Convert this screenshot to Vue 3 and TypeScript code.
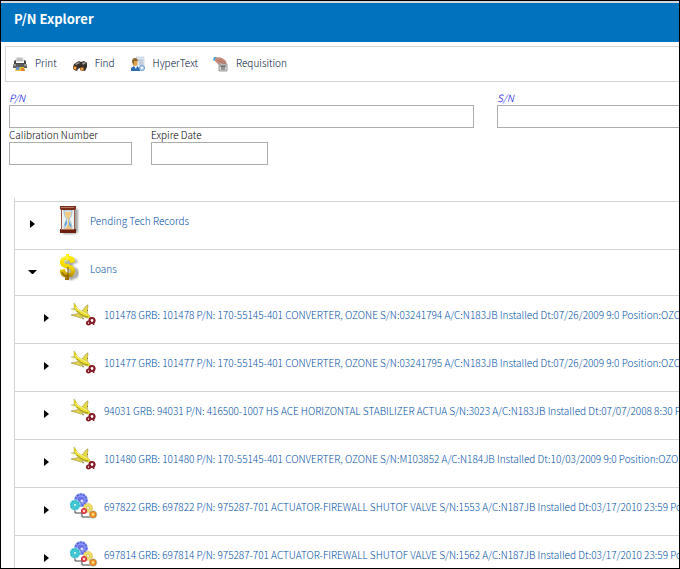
<script setup lang="ts">
import { ref } from 'vue'

type IconName = 'hourglass' | 'dollar' | 'plane' | 'gears'

interface TreeRow {
  id: string
  icon: IconName
  label: string
  level: number
  open: boolean
}

const rows = ref<TreeRow[]>([
  { id: 'pending', icon: 'hourglass', label: 'Pending Tech Records', level: 1, open: false },
  { id: 'loans', icon: 'dollar', label: 'Loans', level: 1, open: true },
  { id: '101478', icon: 'plane', label: '101478 GRB: 101478 P/N: 170-55145-401 CONVERTER, OZONE S/N:03241794 A/C:N183JB Installed Dt:07/26/2009 9:0 Position:OZO', level: 2, open: false },
  { id: '101477', icon: 'plane', label: '101477 GRB: 101477 P/N: 170-55145-401 CONVERTER, OZONE S/N:03241795 A/C:N183JB Installed Dt:07/26/2009 9:0 Position:OZO', level: 2, open: false },
  { id: '94031', icon: 'plane', label: '94031 GRB: 94031 P/N: 416500-1007 HS ACE HORIZONTAL STABILIZER ACTUA S/N:3023 A/C:N183JB Installed Dt:07/07/2008 8:30 P', level: 2, open: false },
  { id: '101480', icon: 'plane', label: '101480 GRB: 101480 P/N: 170-55145-401 CONVERTER, OZONE S/N:M103852 A/C:N184JB Installed Dt:10/03/2009 9:0 Position:OZO', level: 2, open: false },
  { id: '697822', icon: 'gears', label: '697822 GRB: 697822 P/N: 975287-701 ACTUATOR-FIREWALL SHUTOF VALVE S/N:1553 A/C:N187JB Installed Dt:03/17/2010 23:59 Po', level: 2, open: false },
  { id: '697814', icon: 'gears', label: '697814 GRB: 697814 P/N: 975287-701 ACTUATOR-FIREWALL SHUTOF VALVE S/N:1562 A/C:N187JB Installed Dt:03/17/2010 23:59 Po', level: 2, open: false },
])

const partNumber = ref('')
const serialNumber = ref('')
const calibration = ref('')
const expireDate = ref('')
</script>

<template>
  <div class="window">
    <header class="titlebar">
      <h1>P/N Explorer</h1>
    </header>

    <nav class="toolbar" aria-label="Actions">
      <button type="button" class="tool">
        <svg viewBox="0 0 16 16" aria-hidden="true">
          <path d="M4 1h7l2 5H3z" fill="#e4e4e4" />
          <path d="M5 2h5l1 3H4z" fill="#bcbcbc" />
          <path d="M2 5l2-1v3h8V4l2 1v7H2z" fill="#484848" />
          <path d="M1 8h14v4H1z" fill="#5c5c5c" />
          <path d="M1 8h3v2H1zM12 8h3v2h-3z" fill="#999" />
          <path d="M4 11h8l1 4H3z" fill="#e8c832" />
          <path d="M4 11h4l-1 3H4z" fill="#6c90d0" />
          <path d="M9 12h3l1 3H9z" fill="#e0802c" />
        </svg>
        <span>Print</span>
      </button>
      <button type="button" class="tool">
        <svg viewBox="0 0 16 16" aria-hidden="true">
          <path d="M2 8l5-3 2 1 3-1 3 2v4l-2 4-4-1-1-2-2 1-1 2-3-1-1-3z" fill="#38302c" />
          <path d="M3 8l4-2 1 1-4 2zM10 7l2-1 2 1-3 2z" fill="#a09a96" />
          <circle cx="3" cy="12" r="2" fill="#b4641c" />
          <circle cx="3" cy="12" r="1" fill="#f4b868" />
          <circle cx="10" cy="13" r="2" fill="#b4641c" />
          <circle cx="10" cy="13" r="1" fill="#f4b868" />
        </svg>
        <span>Find</span>
      </button>
      <button type="button" class="tool">
        <svg viewBox="0 0 16 16" aria-hidden="true">
          <path d="M6 1h8v12H6z" fill="#dfe8f2" stroke="#b4c2d2" stroke-width=".6" />
          <path d="M8 4h5M9 6h4M9 8h4" stroke="#8fa6c0" stroke-width=".8" />
          <path d="M1 15v-3l3-2h3l3 3v2z" fill="#2c6cb0" />
          <path d="M4 10l2 3 1-3z" fill="#fff" />
          <ellipse cx="5" cy="6.500" rx="2.500" ry="3.500" fill="#e0a050" />
          <path d="M2 6c0-3 1-4 3-4s3 2 3 3L4 5v4z" fill="#8c6830" />
          <circle cx="12" cy="12" r="2.600" fill="#b4d0ee" stroke="#7ca4d4" />
          <circle cx="12" cy="12" r="1" fill="#fff" />
        </svg>
        <span>HyperText</span>
      </button>
      <button type="button" class="tool">
        <svg viewBox="0 0 16 16" aria-hidden="true">
          <path d="M1 1l3 0-2 4-2-1z" fill="#38a8e0" />
          <path d="M2 2c4-2 8 0 11 3l1 4-3 1-3-3-2 2-4-4z" fill="#c98d7c" />
          <path d="M4 4l4 2 3 3M7 3l5 4" stroke="#a4695d" stroke-width=".8" fill="none" />
          <path d="M6 8h8v7H6z" fill="#d4d4d0" stroke="#888" stroke-width=".8" />
          <path d="M7 10h6M9 10v4M11 10v4" stroke="#555" fill="none" />
        </svg>
        <span>Requisition</span>
      </button>
    </nav>

    <form class="filters" @submit.prevent>
      <div class="fields wide">
        <div class="field">
          <label for="pn" class="key">P/N</label>
          <input id="pn" v-model="partNumber" type="text" />
        </div>
        <div class="field">
          <label for="sn" class="key">S/N</label>
          <input id="sn" v-model="serialNumber" type="text" />
        </div>
      </div>
      <div class="fields narrow">
        <div class="field">
          <label for="cal">Calibration Number</label>
          <input id="cal" v-model="calibration" type="text" />
        </div>
        <div class="field">
          <label for="exp">Expire Date</label>
          <input id="exp" v-model="expireDate" type="text" />
        </div>
      </div>
    </form>

    <ul class="tree">
      <li
        v-for="row in rows"
        :key="row.id"
        class="row"
        :class="{ child: row.level === 2, open: row.open }"
      >
        <button
          type="button"
          class="toggle"
          :aria-expanded="row.open"
          :aria-label="row.label"
          @click="row.open = !row.open"
        >
          <svg viewBox="0 0 10 10" aria-hidden="true">
            <path v-if="row.open" d="M0 3h9L5 7H4z" />
            <path v-else d="M2 1l5 4-5 4z" />
          </svg>
        </button>

        <svg v-if="row.icon === 'hourglass'" class="icon" viewBox="0 0 32 32" aria-hidden="true">
          <defs>
            <filter id="glass-shadow"><feGaussianBlur stdDeviation="1" /></filter>
          </defs>
          <path d="M7 3h15v23l-3 2H7z" fill="#666" opacity=".6" filter="url(#glass-shadow)" />
          <path d="M5 3h14v21H5z" fill="#eef3f6" />
          <path d="M5 3h1v21H5zM18 3h1v21h-1z" fill="#9a5a44" />
          <path d="M8 4h8c0 5-1 7-3 9 2 3 3 6 3 11H8c0-5 1-8 3-11-2-2-3-4-3-9z" fill="#d5e6f1" stroke="#85a5ba" stroke-width=".7" />
          <path d="M9 6h6c0 3-1 5-3 7-2-2-3-4-3-7z" fill="#f2ca7c" />
          <path d="M12 12h1v7l3 4H9l3-4z" fill="#e8c47c" />
          <path d="M9 17l2-3v4l-2 3zM13 15l2 4v3l-2-3z" fill="#68a5d0" />
          <path d="M4 0h16v3l-1 1H5L4 3z" fill="#7d2e1b" />
          <path d="M5 1h13v1H5z" fill="#b47860" />
          <path d="M4 23h16v4H4z" fill="#69200f" />
          <path d="M5 23h13v1H5z" fill="#ae6c50" />
        </svg>

        <svg v-else-if="row.icon === 'dollar'" class="icon" viewBox="0 0 32 32" aria-hidden="true">
          <defs>
            <linearGradient id="gold" x1="0" y1="0" x2="0" y2="1">
              <stop offset="0" stop-color="#fff200" />
              <stop offset=".55" stop-color="#f1d400" />
              <stop offset="1" stop-color="#9b6b00" />
            </linearGradient>
            <filter id="soft"><feGaussianBlur stdDeviation="1" /></filter>
          </defs>
          <path d="M20 9c-2-4-10-4-10 1 0 6 11 3 11 9 0 5-9 6-12 1M15 5v21" fill="none" stroke="#666" stroke-width="4" opacity=".6" filter="url(#soft)" />
          <path d="M10 0h3v2c4 0 6 2 6 6l-5 1c0-4-6-4-6-1 0 3 11 1 11 9 0 4-3 6-6 6v3h-4v-3c-3 0-5-2-5-7l5-1c0 5 6 5 6 2 0-4-11-1-11-9 0-3 2-5 6-6z" fill="url(#gold)" />
          <path d="M11 1v7M6 6c1-2 4-3 7-2" fill="none" stroke="#fff75e" stroke-width="1" />
          <path d="M12 13v12M6 18c1 3 3 4 6 4" fill="none" stroke="#805500" stroke-width="1" />
        </svg>

        <svg v-else-if="row.icon === 'plane'" class="icon" viewBox="0 0 32 32" aria-hidden="true">
          <path d="M12 11l5-6h1l-1 9z" fill="#e6da3c" stroke="#aaa052" stroke-width=".7" />
          <path d="M11 13l4 3-4 2-10-3z" fill="#ded24a" stroke="#aaa052" stroke-width=".7" />
          <path d="M1 9l4-1 2 1-2 1z" fill="#d5ca55" stroke="#bdb470" stroke-width=".5" />
          <path d="M4 3l1 1 3 5 4 2 6 3 2 2v2h-3c-4-1-8-4-11-7L4 7z" fill="#eadf32" stroke="#aaa03c" stroke-width=".5" stroke-linejoin="round" />
          <path d="M6 7l3 3 8 4" stroke="#fff998" stroke-width="1" fill="none" />
          <path d="M7 11c4 4 6 5 11 6" stroke="#968a24" stroke-width="1" fill="none" />
          <path d="M12 18l2 1M17 10l1 1" stroke="#77713a" />
          <circle cx="22" cy="20.500" r="2.500" fill="#fff" stroke="#851923" stroke-width="2.200" />
          <circle cx="18.500" cy="23" r="1.600" fill="#fff" stroke="#851923" stroke-width="1.800" />
          <path d="M23 23l1 2" stroke="#851923" stroke-width="1.500" />
        </svg>

        <svg v-else class="icon" viewBox="0 0 32 32" aria-hidden="true">
          <path d="M5 16v5h7M12 20v5h8" fill="none" stroke="#444" stroke-width="1" />
          <circle cx="11" cy="8" r="7" fill="#a9b8f0" />
          <circle cx="11" cy="8" r="5.500" fill="#6a73ea" stroke="#5862e0" stroke-width="2" stroke-dasharray="2 1" />
          <circle cx="11" cy="8" r="4" fill="none" stroke="#8c98f4" stroke-width="1.500" />
          <circle cx="12" cy="9" r="2" fill="#d4dcff" stroke="#4850d4" stroke-width=".6" />
          <circle cx="5" cy="13" r="5.500" fill="#8adce4" />
          <circle cx="5" cy="13" r="4" fill="#40d0d8" stroke="#2fb4c4" stroke-width="1.500" stroke-dasharray="2 1" />
          <circle cx="5" cy="13" r="1.500" fill="#e8ffff" stroke="#2497a8" stroke-width=".6" />
          <circle cx="18" cy="16" r="5" fill="#efe2a0" />
          <circle cx="18" cy="16" r="4" fill="#f7e66a" stroke="#d8c450" stroke-width="1.200" stroke-dasharray="2 1" />
          <circle cx="18" cy="16" r="1.500" fill="#fff" stroke="#b89c30" stroke-width=".6" />
          <circle cx="14" cy="19" r="2.600" fill="#f05050" stroke="#d23040" stroke-width="1" />
          <circle cx="14" cy="19" r="1" fill="#fff" />
          <circle cx="23" cy="22.500" r="4.200" fill="#b8d4d8" />
          <circle cx="23" cy="22.500" r="3" fill="#f7a138" stroke="#d88020" stroke-width="1.200" />
          <circle cx="23" cy="22.500" r="1" fill="#fff0ac" />
        </svg>

        <a href="#" class="label" @click.prevent>{{ row.label }}</a>
      </li>
    </ul>
  </div>
</template>

<style>
body {
  margin: 0;
  background: #fff;
}
</style>

<style scoped>
.window {
  box-sizing: border-box;
  height: 100vh;
  overflow: hidden;
  border: 1px solid #000;
  background: #fff;
  color: #000;
  font-family: "Noto Sans CJK SC", "Noto Sans", sans-serif;
  font-size: 10px;
  font-weight: 300;
  line-height: 14px;
}

.titlebar {
  border-top: 2px solid #d9d6da;
  background: #0072be;
  padding: 7px 13px 14px;
}

.titlebar h1 {
  margin: 0;
  color: #fff;
  font-size: 13px;
  line-height: 18px;
  font-weight: 700;
}

.toolbar {
  display: flex;
  align-items: center;
  gap: 15px;
  margin: 4px 0 0 4px;
  padding: 7px 6px 9px;
  border: 1px solid #d3d3d3;
  border-right: 0;
}

.tool {
  display: flex;
  align-items: center;
  gap: 7px;
  padding: 0;
  border: 0;
  background: none;
  color: #001238;
  font: inherit;
  cursor: pointer;
}

.tool svg {
  width: 16px;
  height: 16px;
  margin-top: 2px;
}

.filters {
  padding: 9px 0 0 8px;
}

.fields {
  display: grid;
}

.wide {
  grid-template-columns: 465px 465px;
  column-gap: 23px;
}

.narrow {
  grid-template-columns: 123px 117px;
  column-gap: 19px;
}

.field {
  display: flex;
  flex-direction: column;
}

.field label {
  line-height: 14px;
}

.field .key {
  color: #0000e0;
  font-style: italic;
}

.field input {
  box-sizing: border-box;
  width: 100%;
  height: 23px;
  padding: 0 4px;
  border: 1px solid #acacac;
  border-radius: 0;
  background: #fff;
  font: inherit;
}

.tree {
  margin: 33px 0 0 13px;
  padding: 3px 0 0;
  border-left: 1px solid #d3d3d3;
  list-style: none;
}

.row {
  display: flex;
  align-items: center;
  padding: 4px 0 11px 13px;
  border-top: 1px solid #d3d3d3;
  white-space: nowrap;
}

.row.open {
  padding-bottom: 9px;
}

.row.child {
  padding-left: 27px;
}

.toggle {
  display: flex;
  margin-top: 4px;
  margin-right: 18px;
  padding: 0;
  border: 0;
  background: none;
  cursor: pointer;
}

.toggle svg {
  width: 10px;
  height: 10px;
}

.icon {
  flex: none;
  width: 32px;
  height: 32px;
  margin-right: 2px;
}

.label {
  margin-bottom: 2px;
  color: #004fa6;
  text-decoration: none;
}
</style>
